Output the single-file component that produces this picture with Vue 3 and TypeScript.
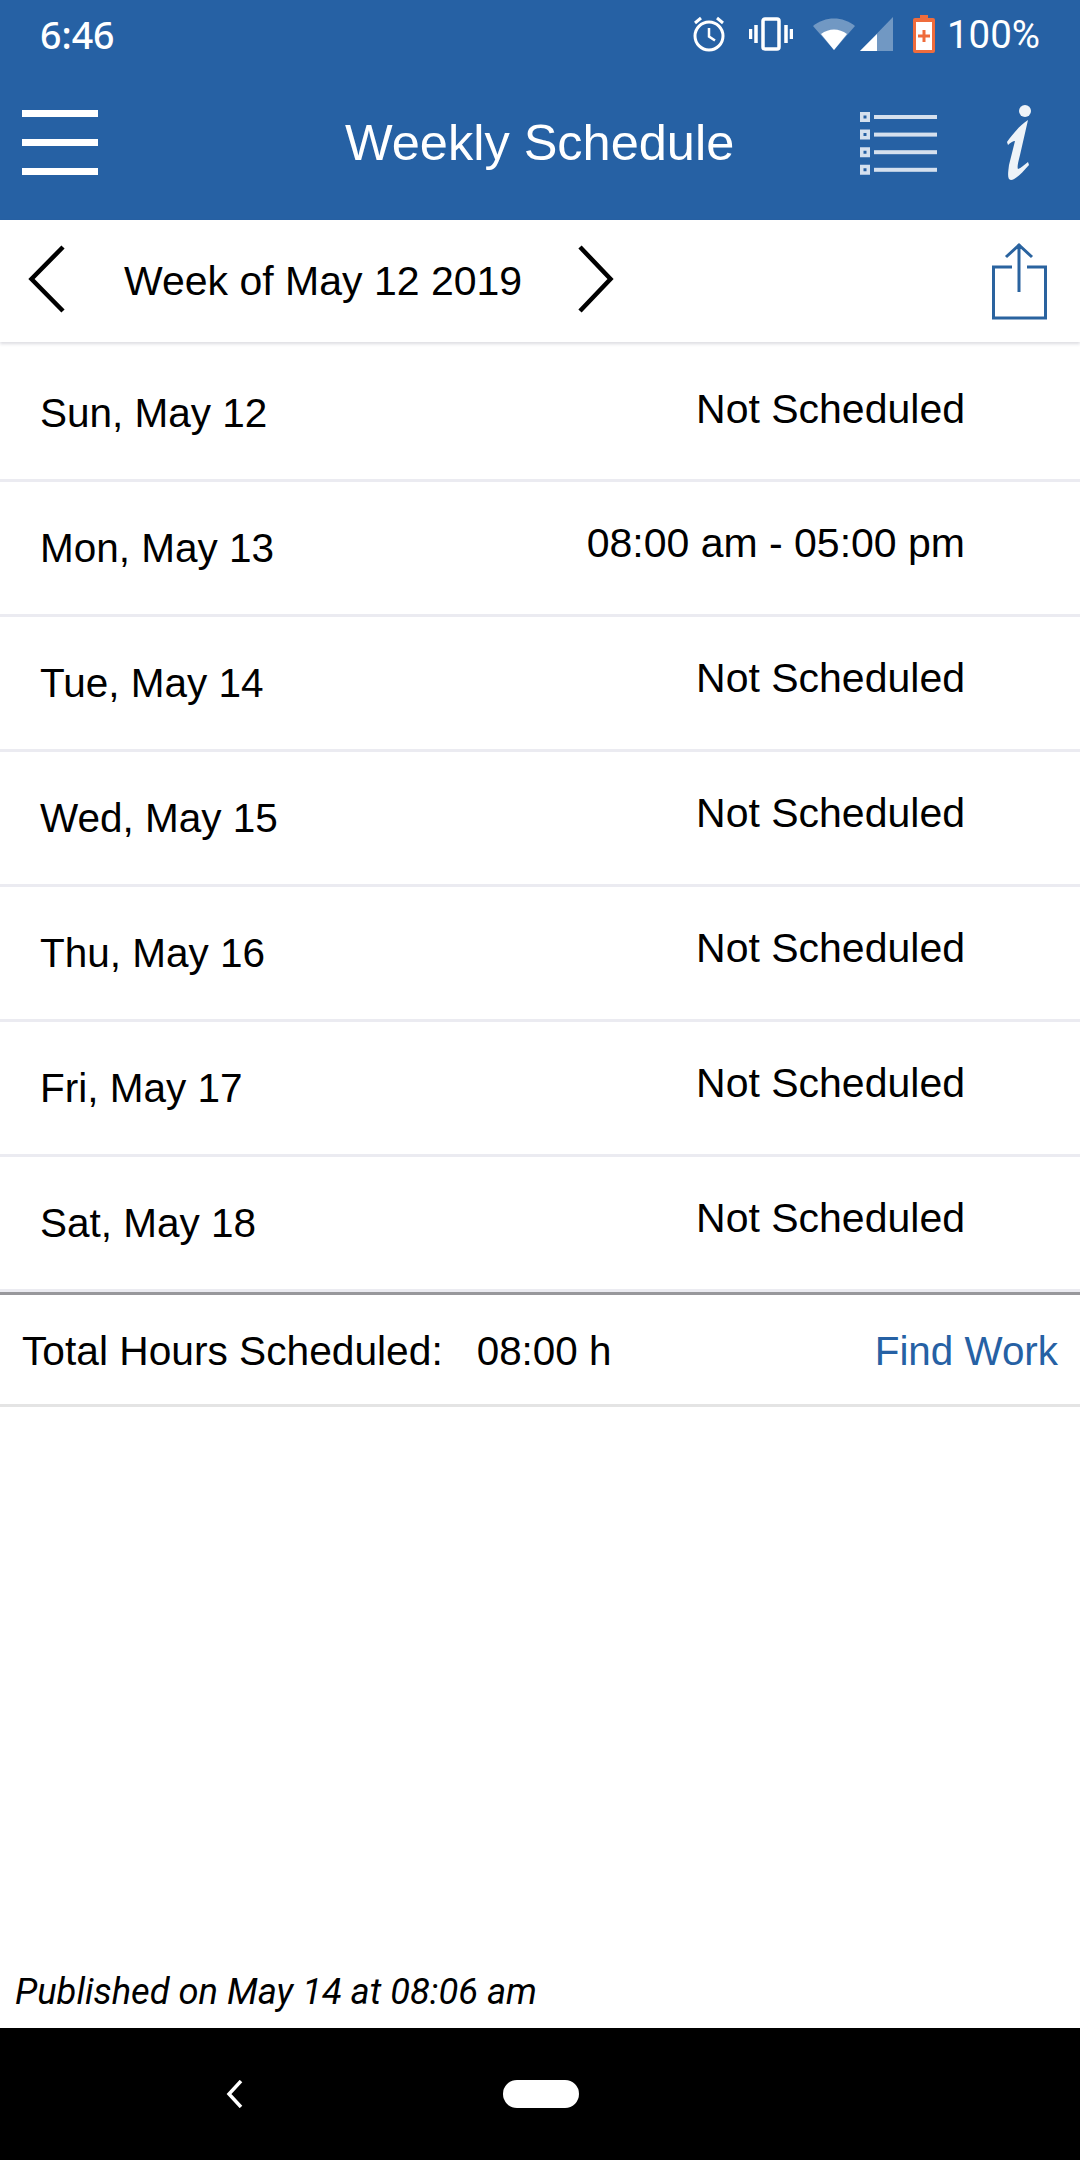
<script setup lang="ts">
interface DayRow {
  day: string
  shift: string
}

const days: DayRow[] = [
  { day: 'Sun, May 12', shift: 'Not Scheduled' },
  { day: 'Mon, May 13', shift: '08:00 am - 05:00 pm' },
  { day: 'Tue, May 14', shift: 'Not Scheduled' },
  { day: 'Wed, May 15', shift: 'Not Scheduled' },
  { day: 'Thu, May 16', shift: 'Not Scheduled' },
  { day: 'Fri, May 17', shift: 'Not Scheduled' },
  { day: 'Sat, May 18', shift: 'Not Scheduled' },
]
</script>

<template>
  <div class="screen">
    <div class="top">
      <div class="status">
        <span class="time">6:46</span>
        <div class="status-icons">
          <svg width="34" height="36" viewBox="0 0 34 36" fill="none" stroke="#fff">
            <circle cx="17" cy="20" r="14" stroke-width="3" />
            <path d="M17 12v8.500l6 4" stroke-width="2.500" />
            <path d="M3 7l6-5M31 7l-6-5" stroke-width="3" />
          </svg>
          <svg class="ic-vib" width="44" height="34" viewBox="0 0 44 34" fill="none" stroke="#fff" stroke-width="3.500">
            <rect x="14" y="2" width="16" height="30" rx="2" />
            <path d="M7 8v18M37 8v18M1.500 12v10M42.500 12v10" />
          </svg>
          <svg class="ic-wifi" width="42" height="34" viewBox="0 0 42 34">
            <path d="M0 9C12-1 30-1 42 9L21 33z" fill="#fff" opacity="0.35" />
            <path d="M8 17c8-6 18-6 26 0L21 33z" fill="#fff" />
          </svg>
          <svg class="ic-signal" width="33" height="34" viewBox="0 0 33 34">
            <path d="M33 0v34H0z" fill="#fff" opacity="0.35" />
            <path d="M17 17v17H0z" fill="#fff" />
          </svg>
          <svg class="ic-batt" width="22" height="38" viewBox="0 0 22 38">
            <path d="M7 0h8v3h5a2 2 0 0 1 2 2v31a2 2 0 0 1-2 2H2a2 2 0 0 1-2-2V5a2 2 0 0 1 2-2h5z" fill="#ef6c3c" />
            <rect x="3" y="7" width="16" height="28" fill="#fff" />
            <path d="M11 15v12M5 21h12" stroke="#ef6c3c" stroke-width="3" />
          </svg>
          <span class="pct">100%</span>
        </div>
      </div>
      <div class="titlebar">
        <div class="burger"><i></i><i></i><i></i></div>
        <div class="title">Weekly Schedule</div>
        <svg class="list-icon" width="77" height="64" viewBox="0 0 77 64" fill="#d5e0ee">
          <g v-for="n in 4" :key="n">
            <path :d="`M0 ${(n - 1) * 17.600 + 1}h10v10H0z M3.500 ${(n - 1) * 17.600 + 4.500}v3h3v-3z`" fill-rule="evenodd" />
            <rect x="14" :y="(n - 1) * 17.600 + 4" width="63" height="4" />
          </g>
        </svg>
        <svg class="info" width="26" height="75" viewBox="0 0 26 75" fill="#eef3f8">
          <circle cx="19" cy="6" r="6" />
          <path d="M1 37C6 30 14 20 22 15L14 50C12 58 11 62 12 64C15 63 18 60 22 57L23 60C16 68 9 75 5 75C1 75 2 68 3 60L9 36C7 36 4 38 2 40z" />
        </svg>
      </div>
    </div>

    <div class="weekbar">
      <svg class="chev" width="38" height="70" viewBox="0 0 38 70" fill="none" stroke="#000" stroke-width="4.500">
        <path d="M35 2L3.500 34 35 66" />
      </svg>
      <span class="week">Week of May 12 2019</span>
      <svg class="chev" width="38" height="70" viewBox="0 0 38 70" fill="none" stroke="#000" stroke-width="4.500">
        <path d="M4 2l30.500 32L4 66" />
      </svg>
      <svg class="share" width="57" height="78" viewBox="0 0 57 78" fill="none" stroke="#2a639f" stroke-width="3">
        <path d="M21 25H2.500v51h52V25H36M28 2v48M15 15L28 3l13 12" />
      </svg>
    </div>

    <div class="rows">
      <div v-for="d in days" :key="d.day" class="row">
        <span class="day">{{ d.day }}</span>
        <span class="shift">{{ d.shift }}</span>
      </div>
    </div>

    <div class="total">
      <span class="total-label">Total Hours Scheduled:</span>
      <span class="total-val">08:00 h</span>
      <span class="find">Find Work</span>
    </div>

    <div class="spacer"></div>
    <div class="published">Published on May 14 at 08:06 am</div>

    <div class="nav">
      <svg width="18" height="28" viewBox="0 0 18 28" fill="none" stroke="#fff" stroke-width="3.500">
        <path d="M15 1L3 14l12 13" />
      </svg>
      <span class="pill"></span>
    </div>
  </div>
</template>

<style scoped>
.screen {
  width: 1080px;
  height: 2160px;
  display: flex;
  flex-direction: column;
  background: #fff;
  color: #000;
  font-family: "Liberation Sans", Arial, sans-serif;
}

.top {
  height: 220px;
  flex: none;
  background: #2661a4;
  color: #fff;
}

.status {
  height: 68px;
  display: flex;
  align-items: center;
  justify-content: space-between;
  padding: 0 40px 0 40px;
}

.time {
  font-family: "Noto Sans", sans-serif;
  font-size: 37.500px;
  font-weight: 500;
}

.status-icons {
  display: flex;
  align-items: center;
}

.ic-vib {
  margin-left: 23px;
}

.ic-wifi {
  margin-left: 20px;
}

.ic-signal {
  margin-left: 5px;
}

.ic-batt {
  margin-left: 20px;
}

.pct {
  font-family: Roboto, sans-serif;
  font-size: 38.500px;
  margin-left: 12px;
}

.titlebar {
  height: 152px;
  display: flex;
  align-items: center;
  padding: 0 0 3px 22px;
  box-sizing: border-box;
}

.burger {
  width: 76px;
  height: 65px;
  display: flex;
  flex-direction: column;
  justify-content: space-between;
}

.burger i {
  display: block;
  height: 7px;
  background: #fff;
}

.title {
  margin-left: 247px;
  font-size: 50.500px;
  width: 400px;
}

.list-icon {
  margin-left: 115px;
}

.info {
  margin-left: 69px;
}

.weekbar {
  height: 122px;
  flex: none;
  display: flex;
  align-items: center;
  padding-left: 28px;
  box-shadow: 0 2px 3px rgba(120, 120, 140, 0.25);
  position: relative;
}

.chev {
  margin-top: -2px;
}

.week {
  margin-left: 58px;
  font-size: 41px;
  width: 452px;
}

.share {
  margin-left: 377px;
}

.row {
  height: 135px;
  display: flex;
  justify-content: space-between;
  padding: 0 115px 0 40px;
  border-bottom: 3px solid #ebebf1;
  box-sizing: border-box;
}

.row:first-child {
  height: 140px;
  padding-top: 5px;
}

.row:first-child .shift {
  margin-top: 39px;
}

.row:last-child {
  height: 135px;
}

.day {
  margin-top: 43px;
  font-size: 40.500px;
}

.shift {
  margin-top: 38px;
  font-size: 41px;
}

.total {
  height: 115px;
  flex: none;
  display: flex;
  align-items: center;
  padding: 3px 22px 0;
  border-top: 3px solid #98989c;
  border-bottom: 3px solid #e4e4e4;
  box-sizing: border-box;
  font-size: 40.400px;
}

.total-label {
  font-size: 40.700px;
}

.total-val {
  margin-left: 34px;
}

.find {
  margin-left: auto;
  color: #2661a4;
}

.spacer {
  flex: 1;
}

.published {
  padding: 0 15px 15px;
  font-family: Roboto, sans-serif;
  font-style: italic;
  font-size: 36.300px;
}

.nav {
  height: 132px;
  flex: none;
  background: #000;
  display: flex;
  align-items: center;
  padding-left: 226px;
}

.pill {
  width: 76px;
  height: 28px;
  margin-left: 259px;
  border-radius: 14px;
  background: #fff;
}
</style>

<style>
html,
body {
  margin: 0;
  background: #fff;
}
</style>
